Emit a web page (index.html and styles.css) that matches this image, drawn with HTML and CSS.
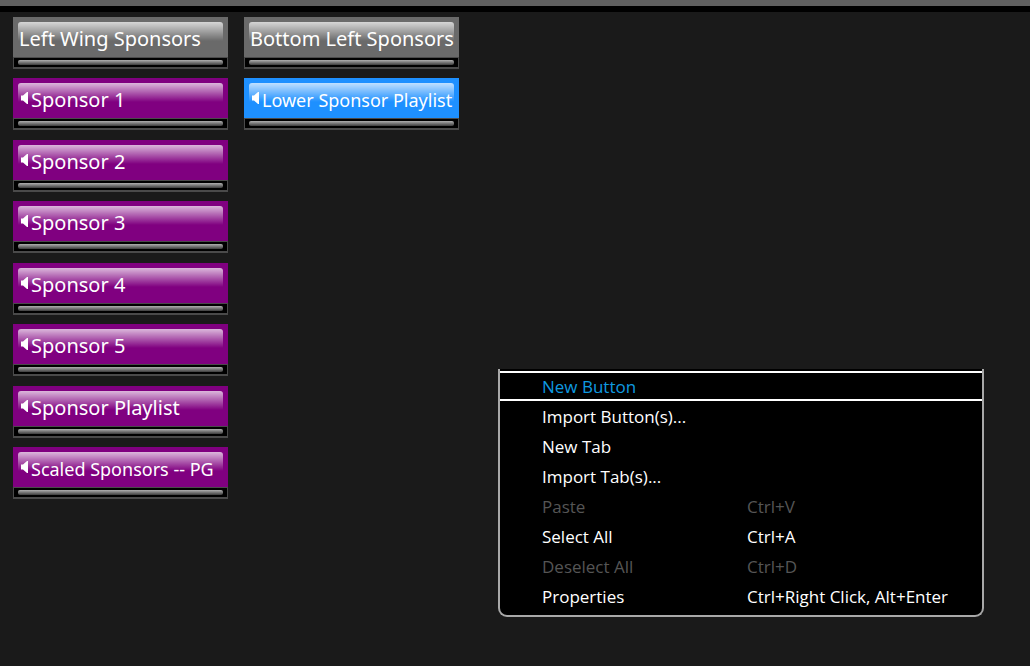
FILE: index.html
```
<!DOCTYPE html>
<html lang="en">
<head>
    <meta charset="UTF-8">
    <meta name="viewport" content="width=device-width, initial-scale=1.0">
    <title>Sponsors</title>
    <link rel="stylesheet" href="styles.css">
</head>
<body>
    <svg class="symbols" aria-hidden="true">
        <symbol id="speaker" viewBox="0 0 7 14">
            <path d="M0 4.5h2L6 1h1v12H6L2 9.5H0z" fill="#fff"/>
        </symbol>
    </svg>

    <header class="top-bar"></header>

    <main class="board">
        <div class="column">
            <button type="button" class="tile header"><span class="face">Left Wing Sponsors</span><span class="strip"></span></button>
            <button type="button" class="tile purple"><span class="face"><svg class="icon"><use href="#speaker"/></svg>Sponsor 1</span><span class="strip"></span></button>
            <button type="button" class="tile purple"><span class="face"><svg class="icon"><use href="#speaker"/></svg>Sponsor 2</span><span class="strip"></span></button>
            <button type="button" class="tile purple"><span class="face"><svg class="icon"><use href="#speaker"/></svg>Sponsor 3</span><span class="strip"></span></button>
            <button type="button" class="tile purple"><span class="face"><svg class="icon"><use href="#speaker"/></svg>Sponsor 4</span><span class="strip"></span></button>
            <button type="button" class="tile purple"><span class="face"><svg class="icon"><use href="#speaker"/></svg>Sponsor 5</span><span class="strip"></span></button>
            <button type="button" class="tile purple"><span class="face"><svg class="icon"><use href="#speaker"/></svg>Sponsor Playlist</span><span class="strip"></span></button>
            <button type="button" class="tile purple small"><span class="face"><svg class="icon"><use href="#speaker"/></svg>Scaled Sponsors -- PG</span><span class="strip"></span></button>
        </div>
        <div class="column">
            <button type="button" class="tile header"><span class="face">Bottom Left Sponsors</span><span class="strip"></span></button>
            <button type="button" class="tile blue small"><span class="face"><svg class="icon"><use href="#speaker"/></svg>Lower Sponsor Playlist</span><span class="strip"></span></button>
        </div>
    </main>

    <div class="menu" role="menu">
        <button type="button" role="menuitem" class="item active"><span>New Button</span></button>
        <button type="button" role="menuitem" class="item"><span>Import Button(s)...</span></button>
        <button type="button" role="menuitem" class="item"><span>New Tab</span></button>
        <button type="button" role="menuitem" class="item"><span>Import Tab(s)...</span></button>
        <button type="button" role="menuitem" class="item" disabled><span>Paste</span><span>Ctrl+V</span></button>
        <button type="button" role="menuitem" class="item"><span>Select All</span><span>Ctrl+A</span></button>
        <button type="button" role="menuitem" class="item" disabled><span>Deselect All</span><span>Ctrl+D</span></button>
        <button type="button" role="menuitem" class="item"><span>Properties</span><span>Ctrl+Right Click, Alt+Enter</span></button>
    </div>
</body>
</html>
```
FILE: styles.css
```
* {
    margin: 0;
    padding: 0;
    box-sizing: border-box;
}

body {
    min-height: 100vh;
    background-color: #1a1a1a;
    color: #fff;
    font-family: 'Segoe UI', 'Noto Sans', 'Open Sans', sans-serif;
}

button {
    border: none;
    color: inherit;
    font-family: inherit;
    text-align: left;
    white-space: nowrap;
    cursor: pointer;
}

.symbols {
    display: none;
}

.top-bar {
    height: 12px;
    background-color: #606060;
    border-bottom: 6px solid #000;
}

.board {
    display: flex;
    align-items: flex-start;
    gap: 16px;
    padding: 5px 13px;
}

.column {
    display: flex;
    flex-direction: column;
    gap: 9px;
    width: 215px;
}

/* Button tiles */
.tile {
    display: block;
    background: none;
    font-size: 20px;
}

.tile:nth-child(even) {
    margin-bottom: 1px;
}

.tile.small {
    font-size: 18px;
}

.face {
    display: flex;
    align-items: center;
    height: 40px;
    padding: 4px 6px 0;
    line-height: 36px;
    background-color: #6a6a6a;
    position: relative;
    z-index: 0;
}

/* glossy highlight behind the label */
.face::before {
    content: "";
    position: absolute;
    z-index: -1;
    top: 5px;
    left: 5px;
    right: 5px;
    height: 19px;
    border-radius: 3px 3px 0 0;
    background: linear-gradient(rgba(255, 255, 255, 0.72), rgba(255, 255, 255, 0));
}

.purple .face {
    background-color: #800080;
    padding-left: 8px;
}

.blue .face {
    background-color: #1e90ff;
    padding-left: 8px;
}

.icon {
    flex: none;
    width: 7px;
    height: 14px;
    margin: 0 3px 4px 0;
}

.strip {
    display: flex;
    height: 12px;
    padding: 2px 4px;
    background-color: #000;
    border: 1px solid #4a4a4a;
    border-bottom-width: 2px;
}

.strip::before {
    content: "";
    flex: 1;
    border-radius: 2px;
    background: linear-gradient(#b0b0b0, #3c3c3c);
}

/* Context menu */
.menu {
    position: absolute;
    top: 369px;
    left: 498px;
    width: 486px;
    padding: 2px 0 4px;
    background-color: #000;
    border: 2px solid #a8a8a8;
    border-top: none;
    border-radius: 0 0 9px 9px;
    font-family: 'Segoe UI', 'Open Sans', 'Noto Sans', sans-serif;
}

.item {
    display: grid;
    grid-template-columns: 205px 1fr;
    align-items: center;
    width: 100%;
    height: 30px;
    padding: 2px 0 0 42px;
    background: none;
    font-size: 17px;
    line-height: 24px;
}

.item.active {
    color: #0f9ae0;
    border-top: 2px solid #fff;
    border-bottom: 2px solid #fff;
}

.item:disabled {
    color: #555;
    cursor: default;
}
```
